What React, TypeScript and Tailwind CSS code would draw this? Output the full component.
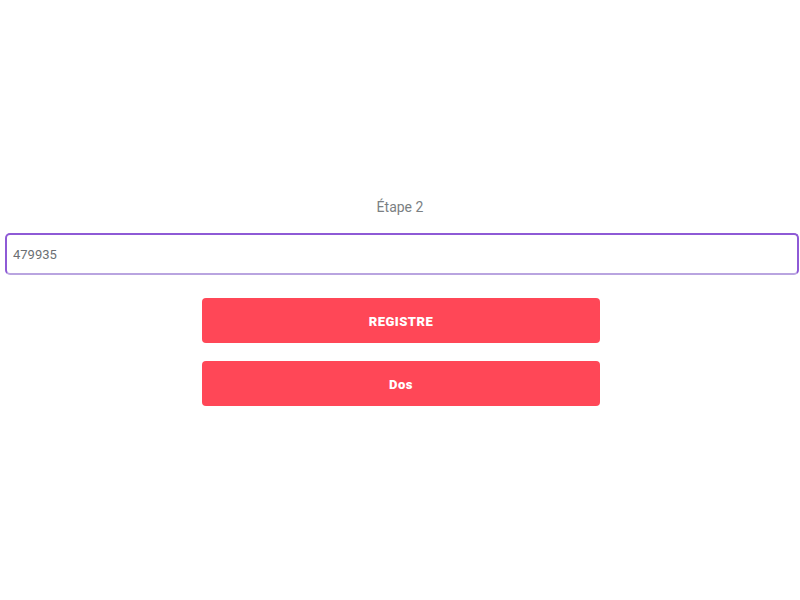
import { useState } from 'react';

export default function App() {
  const [code, setCode] = useState('479935');

  return (
    <div className="w-[800px] h-[600px] bg-white font-['Roboto',sans-serif] pt-[198px]">
      {/* step label */}
      <p className="text-center text-[14px] leading-[18px] text-[#7b7f83]">Étape 2</p>

      {/* code input */}
      <div className="mt-[17px] pl-[5px] pr-[1px]">
        <input
          value={code}
          onChange={(e) => setCode(e.target.value)}
          className="w-full h-[42px] px-[6px] rounded-[5px] border-2 border-[#8e5ad6] border-b-[#b9a4e0] text-[13px] text-[#6b6f73] outline-none"
        />
      </div>

      {/* actions */}
      <div className="mt-[23px] flex flex-col items-center gap-[18px] pl-[2px]">
        <button className="w-[398px] h-[45px] pt-[2px] rounded-[4px] bg-[#ff4757] text-white text-[13px] font-black tracking-[0.5px]">
          REGISTRE
        </button>
        <button className="w-[398px] h-[45px] pt-[2px] rounded-[4px] bg-[#ff4757] text-white text-[13px] font-black tracking-[0.5px]">
          Dos
        </button>
      </div>
    </div>
  );
}
